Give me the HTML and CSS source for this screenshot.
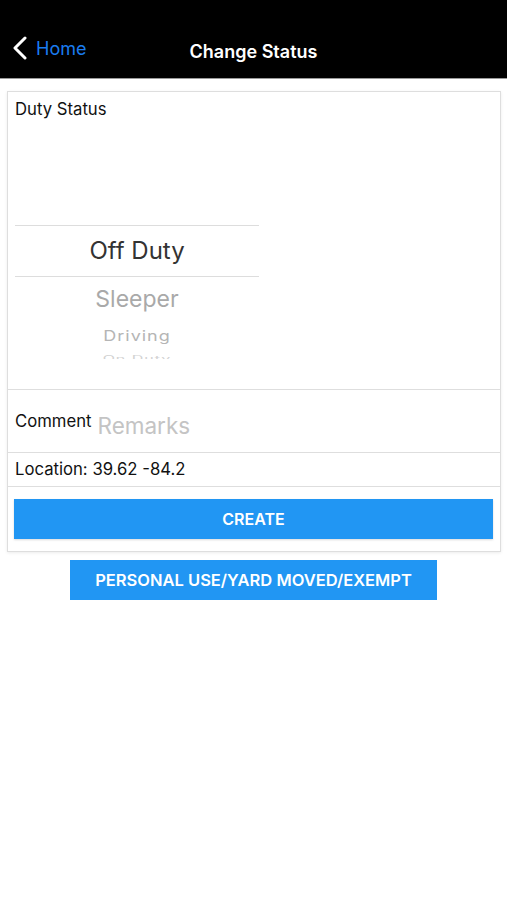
FILE: index.html
```html
<!DOCTYPE html>
<html lang="en">
<head>
    <meta charset="UTF-8">
    <title>Change Status</title>
    <link rel="stylesheet" href="styles.css">
</head>
<body>
    <header class="nav">
        <a class="back" href="#">
            <svg class="chevron" width="16" height="24" viewBox="0 0 16 24">
                <path d="M13 2 L3 12 L13 22" fill="none" stroke="#fff" stroke-width="3" stroke-linecap="round" stroke-linejoin="round"/>
            </svg>
            <span>Home</span>
        </a>
        <h1 class="title">Change Status</h1>
        <div></div>
    </header>

    <div class="card">
        <div class="row status-row">
            <div class="label">Duty Status</div>
            <div class="picker">
                <div class="pick selected">Off Duty</div>
                <div class="pick second">Sleeper</div>
                <div class="pick third">Driving</div>
                <div class="pick fourth">On Duty</div>
            </div>
        </div>
        <div class="row comment-row">
            <div class="label">Comment</div>
            <div class="placeholder">Remarks</div>
        </div>
        <div class="row location-row">Location: 39.62 -84.2</div>
        <div class="button-row">
            <button class="btn create">CREATE</button>
        </div>
    </div>

    <button class="btn personal">PERSONAL USE/YARD MOVED/EXEMPT</button>
</body>
</html>
```

FILE: styles.css
```css
body {
    font-family: 'Inter', 'Liberation Sans', sans-serif;
    margin: 0;
    padding: 0;
    background: #fff;
    color: #111;
}

.nav {
    background: #000;
    border-bottom: 1px solid #9a9a9a;
    display: grid;
    grid-template-columns: 1fr auto 1fr;
    align-items: end;
    padding: 0 0 15px 0;
    box-sizing: border-box;
    height: 79px;
}

.back {
    display: flex;
    align-items: center;
    gap: 8px;
    padding-left: 12px;
    color: #1a7cf0;
    text-decoration: none;
    font-size: 18px;
    margin-bottom: 3px;
}

.title {
    margin: 0;
    color: #fff;
    font-size: 18px;
    font-weight: 600;
    line-height: 22px;
}

.card {
    margin: 12px 6px 8px 7px;
    border: 1px solid #dedede;
    box-shadow: 0 1px 3px rgba(0, 0, 0, 0.08);
    background: #fff;
}

.row {
    border-bottom: 1px solid #dedede;
    font-size: 16.7px;
    line-height: 20px;
}

.status-row {
    padding: 7px 6px 0 7px;
    height: 298px;
    box-sizing: border-box;
}

.picker {
    width: 244px;
    margin-top: 106px;
    height: 134px;
    overflow: hidden;
    text-align: center;
}

.pick {
    color: #bbb;
}

.selected {
    line-height: 50px;
    height: 50px;
    font-size: 24px;
    color: #333;
    border-top: 1px solid #ddd;
    border-bottom: 1px solid #ddd;
}

.second {
    height: 44px;
    line-height: 44px;
    font-size: 23px;
    color: #a9a9a9;
}

.third {
    height: 30px;
    line-height: 30px;
    font-size: 18px;
    color: #b5b5b5;
    transform: scaleY(0.8);
    letter-spacing: 1px;
}

.fourth {
    height: 20px;
    line-height: 20px;
    font-size: 16px;
    color: #d2d2d2;
    transform: scaleY(0.45);
    letter-spacing: 1px;
    margin-top: -3px;
}

.comment-row {
    display: flex;
    height: 63px;
    box-sizing: border-box;
    padding: 21px 6px 0 7px;
    gap: 6px;
}

.placeholder {
    color: #c4c4c4;
    font-size: 22.5px;
    line-height: 26px;
    margin-top: 2px;
}

.location-row {
    padding: 6px 6px 7px 7px;
}

.button-row {
    padding: 12px 7px 12px 6px;
}

.btn {
    display: block;
    border: none;
    background: #2196f3;
    color: #fff;
    font-family: 'Inter', 'Liberation Sans', sans-serif;
    font-size: 16px;
    font-weight: 600;
    height: 40px;
    cursor: pointer;
}

.create {
    width: 100%;
    box-shadow: 0 1px 2px rgba(0, 0, 0, 0.15);
}

.personal {
    width: 367px;
    margin: 0 auto;
    font-size: 16.5px;
}
```
